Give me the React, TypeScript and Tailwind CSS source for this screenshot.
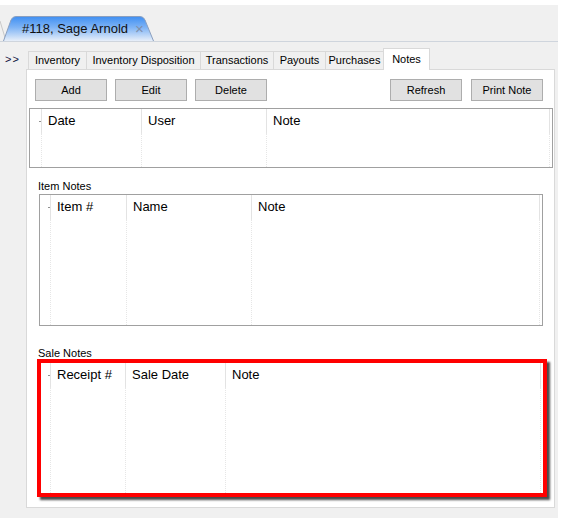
import React from "react";

const font = { fontFamily: '"Liberation Sans", Arial, sans-serif' };

function Col({ w, label, first, grow }: { w?: number; label?: string; first?: boolean; grow?: boolean }) {
  return (
    <div
      className={`flex flex-col h-full ${grow ? "flex-1" : ""}`}
      style={w ? { width: w } : undefined}
    >
      <div className={`h-[24px] flex items-center ${first ? "" : "border-l border-[#e3e3e3]"} pl-[6px] text-[13px] text-black`}>
        {label}
      </div>
      <div className={`flex-1 ${first ? "" : "border-l border-dotted border-[#e6e6e6]"}`} />
    </div>
  );
}

function Grid({
  cols,
  ind,
  className,
}: {
  cols: { w?: number; label: string }[];
  ind: number;
  className: string;
}) {
  return (
    <div className={`flex bg-white ${className}`}>
      <div className="h-full flex flex-col" style={{ width: ind }}>
        <div className="h-[24px] flex items-center justify-end">
          <div className="w-[2px] h-[1px] bg-[#909090]" />
        </div>
      </div>
      {cols.map((c, i) => (
        <Col key={i} w={c.w} label={c.label} grow={!c.w} />
      ))}
      <div className="w-[3px] h-full flex flex-col">
        <div className="h-[24px] border-l border-[#e3e3e3]" />
        <div className="flex-1 border-l border-dotted border-[#e6e6e6]" />
      </div>
    </div>
  );
}

function Btn({ children }: { children: React.ReactNode }) {
  return (
    <div className="w-[72px] h-[22px] bg-[#e1e1e1] border border-[#adadad] flex items-center justify-center text-[11px] text-black">
      {children}
    </div>
  );
}

const tabs = [
  { label: "Inventory", w: 58 },
  { label: "Inventory Disposition", w: 114 },
  { label: "Transactions", w: 73 },
  { label: "Payouts", w: 52 },
  { label: "Purchases", w: 58 },
];

export default function App() {
  return (
    <div className="w-[561px] h-[518px] bg-white overflow-hidden" style={font}>
      <div className="h-[5px]" />
      <div className="w-[558px] h-[513px] bg-[#f0f0f0] flex flex-col">
        {/* document tab strip */}
        <div className="h-[37px] border-b border-[#cfd5dd] flex items-end relative">
          <svg className="absolute left-0 bottom-0" width="10" height="22" viewBox="0 0 10 22">
            <path d="M0 2 L6 22" stroke="#c8c8c8" strokeWidth="1" fill="none" />
          </svg>
          <div className="relative ml-[3px] w-[151px] h-[25px] flex items-center">
            <svg className="absolute inset-0" width="151" height="25" viewBox="0 0 151 25">
              <defs>
                <linearGradient id="tg" x1="0" y1="0" x2="0" y2="1">
                  <stop offset="0" stopColor="#3f8ff2" />
                  <stop offset="0.45" stopColor="#7fb4f5" />
                  <stop offset="1" stopColor="#e8eff9" />
                </linearGradient>
              </defs>
              <path
                d="M0.5 25 L8 4 Q9.5 0.5 13 0.5 L137 0.5 Q140.5 0.5 142 4 L150.5 25"
                fill="url(#tg)"
                stroke="#8a9fbf"
                strokeWidth="1"
              />
            </svg>
            <span className="relative ml-[19px] text-[13px] text-[#111]">#118, Sage Arnold</span>
            <span className="relative ml-[7px] text-[15px] leading-none text-[#8090aa]">×</span>
          </div>
        </div>
        {/* sub tabs */}
        <div className="h-[27px] flex items-end">
          <div className="w-[28px] h-[20px] flex items-center pl-[5px] text-[11px] text-[#101040] tracking-[1px]">
            &gt;&gt;
          </div>
          {tabs.map((t) => (
            <div
              key={t.label}
              className="h-[18px] border-t border-l border-[#d9d9d9] bg-[#f0f0f0] flex items-center justify-center text-[11px] text-black"
              style={{ width: t.w }}
            >
              {t.label}
            </div>
          ))}
          <div className="w-[47px] h-[22px] border-t border-l border-r border-[#d9d9d9] bg-white flex items-start justify-center pt-[2px] text-[11px] text-black relative top-[1px]">
            Notes
          </div>
        </div>
        {/* panel */}
        <div className="ml-[26px] w-[529px] h-[439px] border border-[#d9d9d9] bg-white flex flex-col">
          <div className="mt-[9px] flex justify-between pl-[8px] pr-[11px]">
            <div className="flex gap-[8px]">
              <Btn>Add</Btn>
              <Btn>Edit</Btn>
              <Btn>Delete</Btn>
            </div>
            <div className="flex gap-[9px]">
              <Btn>Refresh</Btn>
              <Btn>Print Note</Btn>
            </div>
          </div>
          <Grid
            ind={11}
            className="mt-[7px] ml-[2px] w-[524px] h-[60px] border border-[#a0a0a0]"
            cols={[
              { w: 100, label: "Date" },
              { w: 125, label: "User" },
              { label: "Note" },
            ]}
          />
          <div className="mt-[11px] ml-[11px] h-[14px] flex items-center text-[11px] text-black">Item Notes</div>
          <Grid
            ind={10}
            className="mt-[1px] ml-[12px] w-[504px] h-[132px] border border-[#a0a0a0]"
            cols={[
              { w: 76, label: "Item #" },
              { w: 125, label: "Name" },
              { label: "Note" },
            ]}
          />
          <div className="mt-[21px] ml-[11px] h-[12px] flex items-center text-[11px] text-black">Sale Notes</div>
          <div className="ml-[10px] w-[510px] h-[138px] border-4 border-[#ff0000] shadow-[3px_3px_2px_rgba(30,30,30,0.8)]">
            <Grid
              ind={9}
              className="w-full h-full"
              cols={[
                { w: 75, label: "Receipt #" },
                { w: 100, label: "Sale Date" },
                { label: "Note" },
              ]}
            />
          </div>
        </div>
      </div>
    </div>
  );
}
